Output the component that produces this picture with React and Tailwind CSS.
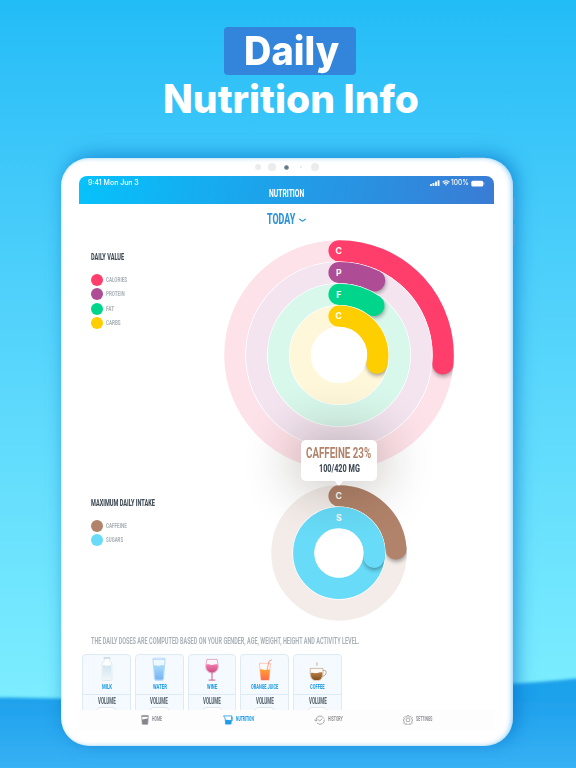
import { useLayoutEffect, useRef } from 'react'
import { clsx } from 'clsx'

// Squeezes (or stretches) a line of text so it fills exactly `w` pixels
function FitText({ w, className, children }) {
  const ref = useRef(null)
  useLayoutEffect(() => {
    const el = ref.current
    el.style.transform = `scaleX(${w / el.offsetWidth})`
  }, [w, children])
  return (
    <span className={clsx('block shrink-0', className)} style={{ width: w }}>
      <span ref={ref} className="inline-block whitespace-nowrap origin-left align-top">{children}</span>
    </span>
  )
}

const dailyRings = [
  { id: 'cal', r: 104.2, color: '#ff3e6c', track: '#fee2e9', angle: 94.9, letter: 'C' },
  { id: 'pro', r: 82.4, color: '#ae4c95', track: '#f3e4f0', angle: 25.7, letter: 'P' },
  { id: 'fat', r: 60.6, color: '#00d68b', track: '#d8f8ec', angle: 35.2, letter: 'F' },
  { id: 'carb', r: 38.8, color: '#ffce00', track: '#fff7d9', angle: 102.2, letter: 'C' },
]

const intakeRings = [
  { id: 'caf', r: 57.1, color: '#b1836a', track: '#f3ece9', angle: 85.9, letter: 'C' },
  { id: 'sug', r: 35.3, color: '#67dbf7', track: '#67dbf7', angle: 97, letter: 'S' },
]

function RingChart({ rings, size }) {
  const c = size / 2
  return (
    <svg width={size} height={size} viewBox={`0 0 ${size} ${size}`} className="block shrink-0">
      <defs>
        <filter id="capShadow" x="-60%" y="-60%" width="220%" height="220%">
          <feGaussianBlur stdDeviation="2" />
        </filter>
      </defs>
      {rings.map(ring => {
        const a = (ring.angle * Math.PI) / 180
        const ex = c + ring.r * Math.sin(a)
        const ey = c - ring.r * Math.cos(a)
        return (
          <g key={ring.id}>
            <clipPath id={`clip-${ring.id}`}>
              <circle cx={c} cy={c} r={ring.r + 10.8} />
            </clipPath>
            <circle cx={c} cy={c} r={ring.r + 11.2} fill="#fff" />
            <circle cx={c} cy={c} r={ring.r} fill="none" stroke={ring.track} strokeWidth="21.2" />
            <g clipPath={`url(#clip-${ring.id})`}>
              <circle cx={ex + 0.5} cy={ey + 2} r="10.6" fill="#000" opacity="0.36" filter="url(#capShadow)" />
            </g>
            <path
              d={`M${c} ${c - ring.r} A${ring.r} ${ring.r} 0 ${ring.angle > 180 ? 1 : 0} 1 ${ex} ${ey}`}
              fill="none"
              stroke={ring.color}
              strokeWidth="21.2"
              strokeLinecap="round"
            />
            <text x={c - 0.3} y={c - ring.r + 3.1} textAnchor="middle" fontSize="8.6" fontWeight="700" fontFamily="Inter, sans-serif" fill="#fff">
              {ring.letter}
            </text>
          </g>
        )
      })}
      <circle cx={c} cy={c} r={rings[rings.length - 1].r - 10.8} fill="#fff" />
    </svg>
  )
}

function Legend({ title, titleWidth, items }) {
  return (
    <div>
      <FitText w={titleWidth} className="text-[9.6px] leading-[10px] font-extrabold text-[#3e4a55]">{title}</FitText>
      <div className="mt-[12px] flex flex-col gap-[2.6px]">
        {items.map(item => (
          <div key={item.label} className="flex items-center gap-[3.6px] h-3">
            <span className={clsx('size-[12px] rounded-full', item.dot)} />
            <FitText w={item.w} className="text-[7.8px] leading-[12px] font-bold text-[#a9b1b8]">{item.label}</FitText>
          </div>
        ))}
      </div>
    </div>
  )
}

const dailyLegend = [
  { label: 'CALORIES', w: 21, dot: 'bg-[#ff3e6c]' },
  { label: 'PROTEIN', w: 18.6, dot: 'bg-[#ae4c95]' },
  { label: 'FAT', w: 8, dot: 'bg-[#00d68b]' },
  { label: 'CARBS', w: 14.6, dot: 'bg-[#ffce00]' },
]

const intakeLegend = [
  { label: 'CAFFEINE', w: 20.6, dot: 'bg-[#b1836a]' },
  { label: 'SUGARS', w: 17, dot: 'bg-[#67dbf7]' },
]

/* Drink drawings, all on a 24x26 canvas */
function MilkIcon() {
  return (
    <svg width="24" height="26" viewBox="0 0 24 26" fill="none">
      <defs>
        <linearGradient id="milk" x1="0" y1="0" x2="0" y2="1">
          <stop offset="0" stopColor="#cfe5f0" />
          <stop offset="1" stopColor="#f0f6f9" />
        </linearGradient>
      </defs>
      <path d="M9.3 2.6V4.3C9.3 5.6 7.1 6.2 7.1 8.2V23.4a1.1 1.1 0 0 0 1.1 1.1h7.6a1.1 1.1 0 0 0 1.1-1.1V8.2c0-2-2.2-2.6-2.2-3.9V2.6" fill="#fbfdfe" stroke="#d3dde3" strokeWidth="0.6" />
      <path d="M7.8 9.4c1.6-.8 2.8.8 4.4.5 1.4-.2 2.4-.9 4-.5v13.8c0 .4-.3.7-.7.7h-7c-.4 0-.7-.3-.7-.7z" fill="url(#milk)" />
      <rect x="8.6" y="1.2" width="6.8" height="1.6" rx="0.6" fill="#c7d6de" />
    </svg>
  )
}

function WaterIcon() {
  return (
    <svg width="24" height="26" viewBox="0 0 24 26" fill="none">
      <defs>
        <linearGradient id="water" x1="0" y1="0" x2="0" y2="1">
          <stop offset="0" stopColor="#a9dbfb" />
          <stop offset="1" stopColor="#73b4f5" />
        </linearGradient>
      </defs>
      <path d="M5.9 2.8h12.2L16.5 23.2a1.4 1.4 0 0 1-1.4 1.2H8.9a1.4 1.4 0 0 1-1.4-1.2z" fill="#eef8ff" stroke="#9dcbf5" strokeWidth="0.7" />
      <path d="M6.8 9.4c1.8-.6 3.2.8 5.2.4 1.8-.3 3.4-1.3 5.2-.4l-1.2 13.4a1.1 1.1 0 0 1-1.1 1H9.1a1.1 1.1 0 0 1-1.1-1z" fill="url(#water)" />
      <ellipse cx="12" cy="2.8" rx="6" ry="0.8" fill="#e4f3fe" stroke="#9dcbf5" strokeWidth="0.5" />
    </svg>
  )
}

function WineIcon() {
  return (
    <svg width="24" height="26" viewBox="0 0 24 26" fill="none">
      <defs>
        <linearGradient id="wine" x1="0" y1="0" x2="0" y2="1">
          <stop offset="0" stopColor="#f37aaf" />
          <stop offset="1" stopColor="#c94d83" />
        </linearGradient>
      </defs>
      <path d="M6.9 3.4h10.2c.6 3.4 1.1 5.6 1.1 7.7 0 3.3-2.8 5.9-6.2 5.9s-6.2-2.6-6.2-5.9c0-2.1.5-4.3 1.1-7.7z" fill="#fdf5f9" stroke="#d27aa0" strokeWidth="0.6" />
      <path d="M6.3 8.6c2-.9 3.7.6 5.7.4s3.7-1.2 5.7-.4c.9 4.2-1.5 7.9-5.7 7.9s-6.6-3.7-5.7-7.9z" fill="url(#wine)" />
      <path d="M12 16.8v7M9 24.1h6" stroke="#c94d83" strokeWidth="0.9" strokeLinecap="round" />
    </svg>
  )
}

function JuiceIcon() {
  return (
    <svg width="24" height="26" viewBox="0 0 24 26" fill="none">
      <defs>
        <linearGradient id="juice" x1="0" y1="0" x2="0" y2="1">
          <stop offset="0" stopColor="#ffa035" />
          <stop offset="1" stopColor="#ff6b45" />
        </linearGradient>
      </defs>
      <path d="M6.4 7.3h11.2L16 24.2H8z" fill="#fffaf7" stroke="#fba898" strokeWidth="0.6" strokeLinejoin="round" />
      <path d="M7 13.6c1.7-.8 3 .6 4.9.4 1.7-.2 3.3-1 5-.4L15.900 23.200a1 1 0 0 1-1 .9H9a1 1 0 0 1-1-.9z" fill="url(#juice)" />
      <path d="M14.200 13.400 16 5.200l2.500-1.200" stroke="#fb8f7f" strokeWidth="0.9" strokeLinecap="round" strokeLinejoin="round" />
    </svg>
  )
}

function CoffeeIcon() {
  return (
    <svg width="24" height="26" viewBox="0 0 24 26" fill="none">
      <defs>
        <linearGradient id="coffee" x1="0" y1="0" x2="0" y2="1">
          <stop offset="0" stopColor="#b9814a" />
          <stop offset="1" stopColor="#84501f" />
        </linearGradient>
      </defs>
      <path d="M11.500 6.600v2.800M12.600 7v2" stroke="#d9c7b2" strokeWidth="0.8" strokeLinecap="round" />
      <path d="M18 14.400h1.200a2 2 0 0 1 2 2.200c0 2.200-2 3.700-4.300 3.700" stroke="#c5a98c" strokeWidth="1" />
      <path d="M5.200 12.400H18v4.300c0 4.700-2 7.500-4.400 7.500H9.600c-2.400 0-4.400-2.800-4.400-7.500z" fill="#fdfaf6" stroke="#b8936c" strokeWidth="0.6" />
      <path d="M5.700 17c2-.8 3.900.5 6 .1s3.900-1.400 5.800-.7c0 4.300-1.700 7.500-4 7.500H9.700c-2.300 0-4-3-4-6.900z" fill="url(#coffee)" />
    </svg>
  )
}

const drinks = [
  { name: 'MILK', w: 10, Icon: MilkIcon },
  { name: 'WATER', w: 13.6, Icon: WaterIcon },
  { name: 'WINE', w: 10.4, Icon: WineIcon },
  { name: 'ORANGE JUICE', w: 27.2, Icon: JuiceIcon },
  { name: 'COFFEE', w: 14.4, Icon: CoffeeIcon },
]

function DrinkCard({ name, w, Icon }) {
  return (
    <div className="w-[48.8px] h-[80px] shrink-0 rounded-[4px] border border-[#deeaf4] bg-[#f4faff] flex flex-col items-center">
      <div className="h-[26px] mt-px"><Icon /></div>
      <FitText w={w} className="mt-[2px] text-[6.8px] leading-[6px] font-extrabold text-[#2aa0e8]">{name}</FitText>
      <div className="mt-[4.3px] w-full h-px shrink-0 bg-[#deeaf4]" />
      <FitText w={17.8} className="mt-[2.2px] text-[8.3px] leading-[8px] font-extrabold text-[#5d6871]">VOLUME</FitText>
      <div className="mt-[1.2px] w-[21px] h-[16px] shrink-0 rounded-[5px] border border-[#dfe6ec] bg-white" />
    </div>
  )
}

function HomeIcon() {
  return (
    <svg width="8" height="10" viewBox="0 0 8 10" fill="none">
      <path d="M.7.8h6.6L6.7 9.2H1.3z" stroke="#85858b" strokeWidth="0.7" strokeLinejoin="round" />
      <path d="M1 4.400c1.200.2 1.800-.3 3-.5.900-.1 1.700-.4 3-.5L6.600 9.200H1.400z" fill="#85858b" />
      <path d="M.7.600h6.600v1.200H.8z" fill="#85858b" />
    </svg>
  )
}

function NutritionIcon() {
  return (
    <svg width="10" height="10" viewBox="0 0 10 10" fill="none">
      <path d="M.5.9h8.200L8 9.100H2.600L2.100 3z" stroke="#1f9bea" strokeWidth="0.8" strokeLinejoin="round" />
      <path d="M2.400 5c1.400-.5 2.600.5 5.800 0L7.900 9.100H2.700z" fill="#1f9bea" />
      <path d="M8.400 2.300h1.100L9.200 6H8.200" stroke="#1f9bea" strokeWidth="0.7" />
    </svg>
  )
}

function HistoryIcon() {
  return (
    <svg width="11" height="10" viewBox="0 0 11 10" fill="none" stroke="#85858b" strokeWidth="0.7" strokeLinecap="round" strokeLinejoin="round">
      <path d="M1.900 5.600A4.200 4.200 0 0 1 9.800 3.200M10.300 5A4.200 4.200 0 0 1 9.300 7.900M8.300 8.800A4.200 4.200 0 0 1 3.400 8.300" />
      <path d="M.5 4.800 1.800 6.200 3.300 5M4.400 4.900l1.400 1 2.200-2" />
    </svg>
  )
}

function GearIcon() {
  return (
    <svg width="10" height="10" viewBox="0 0 24 24" fill="none" stroke="#85858b" strokeWidth="1.6" strokeLinejoin="round">
      <path d="M10 1.500h4l.7 3 2 .8 2.700-1.600 2.800 2.800-1.600 2.700.8 2 2.100.5v2.600l-2.100.6-.9 2 1.700 2.700-2.800 2.800-2.700-1.600-2 .8-.7 2.900h-4l-.7-2.900-2-.8-2.700 1.600-2.800-2.800 1.600-2.700-.8-2-2.100-.6v-2.600l2.100-.5.8-2L1.800 6.500l2.800-2.800 2.700 1.600 2-.8z" />
      <circle cx="12" cy="12" r="4.600" />
    </svg>
  )
}

const tabs = [
  { label: 'HOME', w: 10.2, Icon: HomeIcon, cell: 'w-[82px]' },
  { label: 'NUTRITION', w: 18, Icon: NutritionIcon, cell: 'w-[90.5px]', active: true },
  { label: 'HISTORY', w: 14.6, Icon: HistoryIcon, cell: 'w-[89.5px]' },
  { label: 'SETTINGS', w: 16.4, Icon: GearIcon, cell: 'w-[60px]' },
]

function StatusIcons() {
  return (
    <div className="flex items-center text-white">
      <svg width="10" height="6" viewBox="0 0 10 6" fill="currentColor">
        <rect x="0" y="4" width="1.9" height="2" rx="0.4" />
        <rect x="2.5" y="2.9" width="1.9" height="3.1" rx="0.4" />
        <rect x="5" y="1.6" width="1.9" height="4.4" rx="0.4" />
        <rect x="7.6" y="0.3" width="1.9" height="5.7" rx="0.4" />
      </svg>
      <svg width="8" height="6" viewBox="0 0 8 6" className="ml-[2px]" fill="none" stroke="currentColor" strokeWidth="1.2">
        <path d="M.6 2.200a4.900 4.900 0 0 1 6.800 0M1.900 3.700a3 3 0 0 1 4.200 0" />
        <path d="M3 4.600a1.500 1.500 0 0 1 2 0L4 5.800z" fill="currentColor" stroke="none" />
      </svg>
      <FitText w={17.8} className="ml-[1.5px] text-[7px] leading-[8px] font-medium">100%</FitText>
      <svg width="14" height="7" viewBox="0 0 14 7" className="ml-[1.5px]">
        <rect x="0.3" y="0.8" width="12" height="5.6" rx="1.5" fill="#fff" />
        <path d="M13 2.700v1.800" stroke="#fff" strokeOpacity="0.6" strokeWidth="0.7" />
      </svg>
    </div>
  )
}

function Backdrop() {
  return (
    <svg width="576" height="110" viewBox="0 0 576 110" className="absolute left-0 bottom-0">
      <defs>
        <linearGradient id="wave" x1="0" y1="0" x2="0" y2="1">
          <stop offset="0.2" stopColor="#1ea1eb" />
          <stop offset="1" stopColor="#3eb5f8" />
        </linearGradient>
        <filter id="waveSoft" x="-5%" y="-10%" width="110%" height="120%">
          <feGaussianBlur stdDeviation="1.4" />
        </filter>
      </defs>
      <path d="M-20 39.500C40 39.500 90 42 160 40 300 36 430 28 500 26 540 24.500 560 22 600 18V130H-20z" fill="url(#wave)" filter="url(#waveSoft)" />
    </svg>
  )
}

export default function App() {
  return (
    <div className="relative w-[576px] h-[768px] overflow-hidden bg-linear-to-b from-[#22bcf7] to-[#7deeff] to-92% font-[Roboto,sans-serif]">
      <Backdrop />

      {/* Headline */}
      <div className="relative h-[158px] pt-[27px] flex flex-col items-center font-[Inter,sans-serif] font-bold text-white">
        <div className="w-[132px] h-[47.5px] ml-[4px] pl-[19.5px] rounded-[4px] bg-[#3385db]">
          <FitText w={95} className="text-[39.5px] leading-[48px] font-extrabold">Daily</FitText>
        </div>
        <FitText w={256} className="ml-[6px] text-[39px] leading-[48px] font-extrabold">Nutrition Info</FitText>
      </div>

      {/* Tablet */}
      <div className="relative ml-[61px] w-[452px] h-[588px]">
        <div className="absolute -top-[1.5px] right-[28px] w-[25px] h-[3px] bg-[#8fd6f7]" />
        <div className="absolute top-[40px] -right-[2px] w-[4px] h-[22px] rounded-[1px] bg-[#70c8f2]" />
        <div className="absolute top-[66px] -right-[2px] w-[4px] h-[22px] rounded-[1px] bg-[#70c8f2]" />
        <div className="relative h-full rounded-[28px] bg-white px-[18px] shadow-[4px_-3px_18px_rgba(0,105,195,0.6),inset_-2px_0_5px_rgba(80,180,240,0.5),inset_0_0_2px_rgba(90,190,240,0.25)]">
          <div className="h-[18px] flex items-center justify-center ml-[36px] w-[343.5px]">
            <div className="flex items-center">
              <span className="size-[6.5px] rounded-full bg-[#ececec]" />
              <span className="ml-[6.7px] size-[8px] rounded-full bg-[#ececec]" />
              <span className="ml-[8px] size-[5px] rounded-full bg-[#597789] border border-[#8f989c]" />
              <span className="ml-[11px] size-[2px] rounded-full bg-[#e4e4e4]" />
              <span className="ml-[9px] size-[8px] rounded-full bg-[#ececec]" />
            </div>
          </div>

          {/* App bar */}
          <div className="ml-[0.3px] w-[414.3px] h-[28px] rounded-t-[8px] bg-linear-[100deg] from-[#06c2fb] to-[#3a7bd5]">
            <div className="h-[13px] pt-[1px] pl-[8.5px] pr-[9px] flex items-center justify-between font-[Inter,sans-serif] text-white">
              <FitText w={50.6} className="text-[7px] leading-[8px] font-medium">9:41 Mon Jun 3</FitText>
              <StatusIcons />
            </div>
            <FitText w={35} className="ml-[189.5px] mt-[-2px] text-[11.8px] leading-[12px] font-bold text-white">NUTRITION</FitText>
          </div>

          {/* Day picker */}
          <div className="h-[30px] pl-[188px] flex items-center gap-[3.5px] text-[#2a93da]">
            <FitText w={28.5} className="text-[15px] leading-[16px] font-extrabold">TODAY</FitText>
            <svg width="7" height="5" viewBox="0 0 7 5" className="mt-[3px]" fill="none" stroke="currentColor" strokeWidth="1.3" strokeLinecap="round">
              <path d="M.8 1.200C2 2.200 2.600 3 3.500 3S5 2.200 6.200 1.200" />
            </svg>
          </div>

          <div className="h-[246px] flex">
            <div className="w-[143.8px] pl-[11.6px] pt-[17.6px]">
              <Legend title="DAILY VALUE" titleWidth={33.2} items={dailyLegend} />
            </div>
            <div className="pt-[4.5px]"><RingChart rings={dailyRings} size={232} /></div>
          </div>

          <div className="relative h-[148px] flex">
            <div className="w-[189.6px] pl-[11.6px] pt-[17.5px]">
              <Legend title="MAXIMUM DAILY INTAKE" titleWidth={63.8} items={intakeLegend} />
            </div>
            <div className="pt-[3px]"><RingChart rings={intakeRings} size={140} /></div>

            {/* Tooltip */}
            <div className="absolute left-[222px] -top-[40px] w-[75.5px] h-[40.5px] rounded-[5px] bg-white shadow-[0_0_50px_8px_rgba(30,20,10,0.24)] flex flex-col items-center pt-[6.4px]">
              <FitText w={65} className="text-[15px] leading-[15px] font-bold text-[#b1836a]">CAFFEINE 23%</FitText>
              <FitText w={40.5} className="mt-[1.8px] text-[10.4px] leading-[11px] font-extrabold text-[#3e4a55]">100/420 MG</FitText>
              <svg width="12" height="6" viewBox="0 0 12 6" className="absolute left-[31.5px] top-[40px]" fill="#fff">
                <path d="M0 0h12C9 .6 8 5.500 6 5.500S3 .6 0 0z" />
              </svg>
            </div>
          </div>

          <div className="h-[26px] pl-[11.6px] flex items-center">
            <FitText w={268.5} className="text-[9.6px] leading-[10px] font-bold text-[#a9b1b8]">
              THE DAILY DOSES ARE COMPUTED BASED ON YOUR GENDER, AGE, WEIGHT, HEIGHT AND ACTIVITY LEVEL.
            </FitText>
          </div>

          {/* Drinks, cut off by the tab bar */}
          <div className="h-[55.5px] overflow-hidden pl-[3.3px] flex gap-[3.9px]">
            {drinks.map(d => <DrinkCard key={d.name} {...d} />)}
          </div>

          <div className="h-[20px] pl-[62px] flex items-center bg-[#fdfdfd]">
            {tabs.map(({ label, w, Icon, cell, active }) => (
              <div key={label} className={clsx('flex items-center gap-[3px] shrink-0', cell)}>
                <Icon />
                <FitText w={w} className={clsx('text-[6.6px] leading-[7px]', active ? 'text-[#1f9bea] font-extrabold' : 'text-[#909096] font-bold')}>
                  {label}
                </FitText>
              </div>
            ))}
          </div>
        </div>
      </div>
    </div>
  )
}
